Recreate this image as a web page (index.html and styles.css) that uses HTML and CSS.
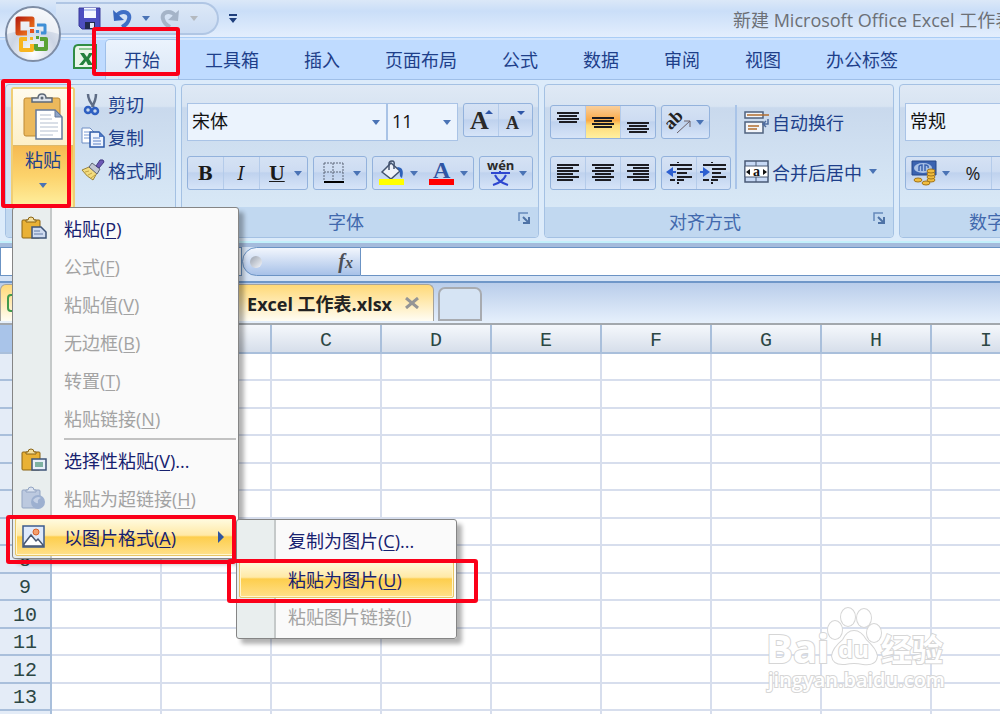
FILE: index.html
```html
<!DOCTYPE html>
<html lang="zh-CN">

<head>
    <meta charset="UTF-8">
    <meta name="viewport" content="width=device-width, initial-scale=1.0">
    <title>Microsoft Office Excel</title>
    <link rel="stylesheet" href="styles.css">
</head>

<body>
    <div class="window">

        <!-- Title bar -->
        <header class="titlebar">
            <div class="quick">
                <button class="icon-btn" aria-label="保存">
                    <svg width="24" height="24" viewBox="0 0 24 24">
                        <path d="M1 1h21v21H4l-3-3z" fill="#4d4fc0" stroke="#3a3b9a"/>
                        <path d="M6 1h12v10H6z" fill="#f4f7ff"/>
                        <path d="M6 2h12v2H6z" fill="#b8c6ee"/>
                        <path d="M7 15h10v7H7z" fill="#222b4e"/>
                        <path d="M12 16h4v5h-4z" fill="#dfe6f7"/>
                    </svg>
                </button>
                <button class="icon-btn" aria-label="撤消">
                    <svg width="22" height="20" viewBox="0 0 22 20">
                        <path d="M5 7C11 0 20 3 18 10c-1 4-3 6-7 8" fill="none" stroke="#3f6fc6" stroke-width="4"/>
                        <path d="M2 1l1 11 10-1z" fill="#3767bf"/>
                    </svg>
                </button>
                <span class="arrow"></span>
                <button class="icon-btn" aria-label="恢复">
                    <svg width="22" height="20" viewBox="0 0 22 20">
                        <path d="M17 7C11 0 2 3 4 10c1 4 3 6 7 8" fill="none" stroke="#a5b4c8" stroke-width="4"/>
                        <path d="M20 1l-1 11-10-1z" fill="#a5b4c8"/>
                    </svg>
                </button>
                <span class="arrow pale"></span>
            </div>
            <button class="icon-btn customize" aria-label="自定义快速访问工具栏">
                <svg width="10" height="10" viewBox="0 0 10 10">
                    <path d="M1 0h8v2H1zM1 4h8L5 9z" fill="#1f3f7d"/>
                </svg>
            </button>
            <h1 class="doc-title">新建 Microsoft Office Excel 工作表.xlsx</h1>
        </header>

        <button class="office-btn" aria-label="Office 按钮">
            <svg width="58" height="58" viewBox="0 0 58 58">
                <defs>
                    <radialGradient id="orb" cx="50%" cy="85%" r="85%">
                        <stop offset="0" stop-color="#ffffff"/>
                        <stop offset="0.5" stop-color="#ccd5e4"/>
                        <stop offset="1" stop-color="#eef2f8"/>
                    </radialGradient>
                    <linearGradient id="red" x1="0" y1="0" x2="1" y2="1">
                        <stop offset="0" stop-color="#b92410"/>
                        <stop offset="1" stop-color="#f37b1c"/>
                    </linearGradient>
                </defs>
                <circle cx="29" cy="29" r="27" fill="url(#orb)" stroke="#7e8da5" stroke-width="2"/>
                <path d="M3 29a26 26 0 0 1 52 0q-26-8-52 0z" fill="#fff" opacity=".55"/>
                <g fill="none" stroke-width="4" stroke-linejoin="round">
                    <path d="M23 28h-9V14h14v8" stroke="url(#red)" stroke-width="5"/>
                    <path d="M33 20h8v8h-4" stroke="#3f8fd6" stroke-width="3"/>
                    <path d="M23 34h-6v11h11v-6" stroke="#f8b51f"/>
                    <path d="M32 39v5h10V34h-6" stroke="#5aa234"/>
                </g>
                <path d="M26 28h4v-4h-4z" fill="#e9521d"/>
                <path d="M32 28h3v-3h-3z" fill="#3f8fd6"/>
                <path d="M26 32h3v3h-3z" fill="#f8b51f"/>
                <path d="M32 31h3v3h-3z" fill="#5aa234"/>
            </svg>
        </button>

        <!-- Ribbon tabs -->
        <nav class="tabs">
            <svg class="app-icon" width="24" height="26" viewBox="0 0 24 26">
                <path d="M5 1h18v23H1V6q0-5 4-5z" fill="#eaf6ea" stroke="#2f8d44" stroke-width="2"/>
                <path d="M6 4h15v2H6z" fill="#8cca93"/>
                <path d="M7 9h4l3 4 2-4h4l-4 6 4 6h-5l-2-4-3 4H6l5-6z" fill="#23803b"/>
            </svg>
            <button class="tab active">开始</button>
            <button class="tab">工具箱</button>
            <button class="tab">插入</button>
            <button class="tab">页面布局</button>
            <button class="tab">公式</button>
            <button class="tab">数据</button>
            <button class="tab">审阅</button>
            <button class="tab">视图</button>
            <button class="tab">办公标签</button>
        </nav>

        <!-- Ribbon -->
        <div class="ribbon">
            <section class="group clipboard">
                <div class="group-body">
                    <button class="paste">
                        <span class="paste-icon">
                            <svg width="42" height="48" viewBox="0 0 42 48">
                                <rect x="1" y="5" width="36" height="38" rx="2" fill="#ecb95c" stroke="#bd8a35"/>
                                <path d="M9 9V5h6q0-4 4-4t4 4h6v4z" fill="#dde2e9" stroke="#5e6978" stroke-width="1.5"/>
                                <circle cx="19" cy="5" r="1.5" fill="#5e6978"/>
                                <path d="M13 17h19l7 7v22H13z" fill="#fff" stroke="#64799c" stroke-width="1.5"/>
                                <path d="M32 17v7h7z" fill="#8fa5c8" stroke="#64799c"/>
                                <path d="M17 22h11M17 26h12M17 30h18M17 34h18M17 38h18M17 42h13" stroke="#b4bfd0"/>
                            </svg>
                        </span>
                        <span class="paste-text">粘贴<span class="arrow"></span></span>
                    </button>
                    <div class="edit-list">
                        <button class="text-btn">
                            <svg width="24" height="24" viewBox="0 0 24 24">
                                <path d="M7 2q0 6 6 13M15 2q0 6-4 13" fill="none" stroke="#5e6c85" stroke-width="2.5"/>
                                <circle cx="7" cy="18" r="3" fill="none" stroke="#2e5fc1" stroke-width="2.5"/>
                                <circle cx="14" cy="19" r="3" fill="none" stroke="#2e5fc1" stroke-width="2.5"/>
                            </svg>
                            剪切
                        </button>
                        <button class="text-btn">
                            <svg width="24" height="24" viewBox="0 0 24 24">
                                <path d="M1 3h8l4 4v11H1z" fill="#fff" stroke="#6f8ec4"/>
                                <path d="M3 7h5M3 10h6M3 13h6" stroke="#7b9bd3"/>
                                <path d="M9 7h9l5 5v10H9z" fill="#eef4ff" stroke="#2d59a8" stroke-width="1.5"/>
                                <path d="M18 7v5h5z" fill="#4f79c4"/>
                                <path d="M12 13h7M12 16h8M12 19h8" stroke="#5b80c4"/>
                            </svg>
                            复制
                        </button>
                        <button class="text-btn">
                            <svg width="24" height="24" viewBox="0 0 24 24">
                                <path d="M1 12l7-3 8 6-4 7q-6-3-11-10z" fill="#f3dc7f" stroke="#9c8439"/>
                                <path d="M4 14l4-1M7 17l4-2M10 20l4-3" stroke="#c5a544"/>
                                <path d="M8 9l3-4 8 6-3 5z" fill="#c2c7d3" stroke="#5f6575"/>
                                <path d="M15 8l4-6q4-1 4 2l-5 6z" fill="#6c59b5" stroke="#423a81"/>
                            </svg>
                            格式刷
                        </button>
                    </div>
                </div>
                <div class="caption"></div>
            </section>

            <section class="group font">
                <div class="group-body">
                    <div class="row">
                        <div class="combos">
                            <label class="combo wide">
                                <select aria-label="字体"><option>宋体</option></select>
                                <span class="arrow"></span>
                            </label>
                            <label class="combo size">
                                <select aria-label="字号"><option>11</option></select>
                                <span class="arrow"></span>
                            </label>
                        </div>
                        <div class="btns grow">
                            <button aria-label="增大字号">
                                <svg width="26" height="26" viewBox="0 0 26 26">
                                    <text x="2" y="22" class="glyph">A</text>
                                    <path d="M17 7h8l-4-4z" fill="#2f57a8"/>
                                </svg>
                            </button>
                            <button aria-label="减小字号">
                                <svg width="26" height="26" viewBox="0 0 26 26">
                                    <text x="4" y="22" class="glyph small">A</text>
                                    <path d="M15 4h8l-4 4z" fill="#2f57a8"/>
                                </svg>
                            </button>
                        </div>
                    </div>
                    <div class="row second">
                        <div class="btns biu">
                            <button class="serif">B</button>
                            <button class="serif italic">I</button>
                            <button class="serif under">U</button>
                            <span class="arrow"></span>
                        </div>
                        <div class="btns border">
                            <button aria-label="边框">
                                <svg width="22" height="22" viewBox="0 0 22 22">
                                    <path d="M1 1h19M1 10h19M1 1v17M10 1v17M20 1v17" stroke="#5c6779" stroke-dasharray="2 1" fill="none"/>
                                    <path d="M1 20h20" stroke="#000" stroke-width="2"/>
                                </svg>
                            </button>
                            <span class="arrow"></span>
                        </div>
                        <div class="btns colors">
                            <button aria-label="填充颜色">
                                <svg width="26" height="26" viewBox="0 0 26 26">
                                    <path d="M3 12l9-9 9 8-9 8z" fill="#eef2f9" stroke="#43536f" stroke-width="1.5"/>
                                    <path d="M10 10V4q0-3 3-3t2 4v4" fill="none" stroke="#43536f" stroke-width="1.5"/>
                                    <path d="M18 7q8 0 5 11-3-1-2-6z" fill="#2d61b9"/>
                                    <path d="M0 19h25v6H0z" fill="#ffff00"/>
                                </svg>
                            </button>
                            <span class="arrow"></span>
                            <button aria-label="字体颜色">
                                <svg width="26" height="26" viewBox="0 0 26 26">
                                    <text x="4" y="18" class="glyph blue">A</text>
                                    <path d="M0 19h25v6H0z" fill="#ff0000"/>
                                </svg>
                            </button>
                            <span class="arrow"></span>
                        </div>
                        <div class="btns wen">
                            <button aria-label="拼音">
                                <svg width="28" height="28" viewBox="0 0 28 28">
                                    <text x="1" y="11" class="pinyin">wén</text>
                                    <path d="M5 14h19M14 12v3M9 16q3 7 13 10M20 16q-3 7-13 10" fill="none" stroke="#2e47d0" stroke-width="2"/>
                                </svg>
                            </button>
                            <span class="arrow"></span>
                        </div>
                    </div>
                </div>
                <div class="caption">字体
                    <svg class="launcher" width="12" height="12" viewBox="0 0 12 12">
                        <path d="M1 9V1h9" fill="none" stroke="#6689ba" stroke-width="1.5"/>
                        <path d="M5 5l5 5M11 5v6H5" fill="none" stroke="#4f73a6" stroke-width="2"/>
                    </svg>
                </div>
            </section>

            <section class="group align">
                <div class="group-body side">
                    <div>
                        <div class="row">
                            <div class="btns three">
                                <button aria-label="顶端对齐">
                                    <svg width="22" height="24" viewBox="0 0 22 24"><path d="M0 3h22M2 6h18M0 9h22M2 12h18"/></svg>
                                </button>
                                <button class="on" aria-label="垂直居中">
                                    <svg width="22" height="24" viewBox="0 0 22 24"><path d="M0 8h22M2 11h18M0 14h22M2 17h18"/></svg>
                                </button>
                                <button aria-label="底端对齐">
                                    <svg width="22" height="24" viewBox="0 0 22 24"><path d="M0 13h22M2 16h18M0 19h22M2 22h18"/></svg>
                                </button>
                            </div>
                            <div class="btns orient">
                                <button aria-label="方向">
                                    <svg width="26" height="26" viewBox="0 0 26 26">
                                        <text x="0" y="16" class="ab" transform="rotate(-45 9 13)">ab</text>
                                        <path d="M11 24L24 12M18 12h6v6" fill="none" stroke="#6b6068"/>
                                    </svg>
                                </button>
                                <span class="arrow"></span>
                            </div>
                        </div>
                        <div class="row second">
                            <div class="btns three">
                                <button aria-label="左对齐">
                                    <svg width="22" height="24" viewBox="0 0 22 24"><path d="M0 4h22M0 7h16M0 10h22M0 13h16M0 16h22M0 19h16"/></svg>
                                </button>
                                <button aria-label="居中">
                                    <svg width="22" height="24" viewBox="0 0 22 24"><path d="M0 4h22M3 7h16M0 10h22M3 13h16M0 16h22M3 19h16"/></svg>
                                </button>
                                <button aria-label="右对齐">
                                    <svg width="22" height="24" viewBox="0 0 22 24"><path d="M0 4h22M6 7h16M0 10h22M6 13h16M0 16h22M6 19h16"/></svg>
                                </button>
                            </div>
                            <div class="btns indent">
                                <button aria-label="减少缩进量">
                                    <svg width="26" height="24" viewBox="0 0 26 24">
                                        <path d="M4 4h22M11 8h15M11 12h10M11 16h15M4 19h5M11 19h7M12 1v1M12 21v2"/>
                                        <path d="M10 11H4" stroke="#2d5fd0"/>
                                        <path d="M0 11l7-5v10z" fill="#2d5fd0" stroke="none"/>
                                    </svg>
                                </button>
                                <button aria-label="增加缩进量">
                                    <svg width="26" height="24" viewBox="0 0 26 24">
                                        <path d="M3 4h23M12 8h14M12 12h9M12 16h14M3 19h6M11 19h7M12 1v1M12 21v2"/>
                                        <path d="M0 11h5" stroke="#2d5fd0"/>
                                        <path d="M10 11L3 6v10z" fill="#2d5fd0" stroke="none"/>
                                    </svg>
                                </button>
                            </div>
                        </div>
                    </div>
                    <div class="wrap-list">
                        <button class="text-btn">
                            <svg width="26" height="24" viewBox="0 0 26 24">
                                <path d="M1 2h18v6H1zM1 12h18v11H1z" fill="#f2f5fa" stroke="#4f627f" stroke-width="1.5"/>
                                <path d="M3 5h22M4 16h11M4 19h9" stroke="#b16d2f" stroke-width="1.5"/>
                                <path d="M24 9v5h-4M22 11l-3 3 3 3" fill="none" stroke="#4f6c9f" stroke-width="1.5"/>
                            </svg>
                            自动换行
                        </button>
                        <button class="text-btn">
                            <svg width="26" height="24" viewBox="0 0 26 24">
                                <path d="M1 1h23v21H1z" fill="#c7d9f5" stroke="#4a5a75" stroke-width="1.5"/>
                                <path d="M1 6h23v11H1z" fill="#fff" stroke="#4a5a75"/>
                                <path d="M12 1v5M12 17v5" stroke="#4a5a75"/>
                                <path d="M2 12l4-3v6zM23 12l-4-3v6z" fill="#111"/>
                                <text x="9" y="16" class="cell-a">a</text>
                            </svg>
                            合并后居中<span class="arrow"></span>
                        </button>
                    </div>
                </div>
                <div class="caption">对齐方式
                    <svg class="launcher" width="12" height="12" viewBox="0 0 12 12">
                        <path d="M1 9V1h9" fill="none" stroke="#6689ba" stroke-width="1.5"/>
                        <path d="M5 5l5 5M11 5v6H5" fill="none" stroke="#4f73a6" stroke-width="2"/>
                    </svg>
                </div>
            </section>

            <section class="group number">
                <div class="group-body">
                    <div class="row">
                        <label class="combo">
                            <select aria-label="数字格式"><option>常规</option></select>
                        </label>
                    </div>
                    <div class="row second">
                        <div class="btns money">
                            <button aria-label="会计数字格式">
                                <svg width="26" height="26" viewBox="0 0 26 26">
                                    <path d="M1 1h24v14H1z" fill="#3b63b0" stroke="#27488a"/>
                                    <ellipse cx="12" cy="8" rx="9" ry="5" fill="#a9c1e6"/>
                                    <path d="M8 11V7q0-2 3-2v6M14 11V5q4 0 3 3" fill="none" stroke="#3b63b0" stroke-width="1.5"/>
                                    <g fill="#f1bd3e" stroke="#a1741c">
                                        <ellipse cx="20" cy="20" rx="4" ry="2"/>
                                        <ellipse cx="20" cy="17" rx="4" ry="2"/>
                                        <ellipse cx="20" cy="14" rx="4" ry="2"/>
                                        <ellipse cx="20" cy="11" rx="4" ry="2"/>
                                        <ellipse cx="7" cy="20" rx="4" ry="2"/>
                                        <ellipse cx="15" cy="23" rx="4" ry="2"/>
                                    </g>
                                </svg>
                            </button>
                            <span class="arrow"></span>
                            <button class="percent">%</button>
                            <button class="blank" aria-label="千位分隔样式"></button>
                        </div>
                    </div>
                </div>
                <div class="caption">数字</div>
            </section>
        </div>

        <!-- Formula bar -->
        <div class="formula-bar">
            <div class="name-box"></div>
            <div class="fx">
                <span class="knob"></span>
                <button class="fx-btn" aria-label="插入函数"><i>f<sub>x</sub></i></button>
            </div>
            <input class="formula" type="text" aria-label="编辑栏">
        </div>

        <!-- Open workbooks -->
        <div class="books">
            <div class="book">
                <span class="book-icon"></span>
                <span>Excel 工作表.xlsx</span>
                <button class="close" aria-label="关闭">
                    <svg width="14" height="12" viewBox="0 0 14 12">
                        <path d="M1 1l12 10M13 1L1 11" stroke="#959595" stroke-width="3"/>
                    </svg>
                </button>
            </div>
            <button class="new-book" aria-label="新建"></button>
        </div>

        <!-- Sheet -->
        <main class="sheet">
            <table>
                <thead>
                    <tr id="letters"><th class="corner"></th></tr>
                </thead>
                <tbody id="cells"></tbody>
            </table>
        </main>

        <!-- Paste menu -->
        <div class="menu paste-menu">
            <button class="item">
                <svg width="26" height="24" viewBox="0 0 26 24">
                    <rect x="1" y="4" width="18" height="18" rx="1" fill="#e9b135" stroke="#8b6414"/>
                    <path d="M5 6V4h2q0-3 3-3t3 3h2v2z" fill="#f4df9c" stroke="#8b6414"/>
                    <path d="M11 11h9l5 5v6H11z" fill="#cfdbef" stroke="#3e5478" stroke-width="1.5"/>
                    <path d="M13 15h6M13 18h9" stroke="#627ba6"/>
                </svg>
                <span>粘贴(<u>P</u>)</span>
            </button>
            <button class="item" disabled><span>公式(<u>F</u>)</span></button>
            <button class="item" disabled><span>粘贴值(<u>V</u>)</span></button>
            <button class="item" disabled><span>无边框(<u>B</u>)</span></button>
            <button class="item" disabled><span>转置(<u>T</u>)</span></button>
            <button class="item" disabled><span>粘贴链接(<u>N</u>)</span></button>
            <div class="line"></div>
            <button class="item">
                <svg width="26" height="24" viewBox="0 0 26 24">
                    <rect x="1" y="4" width="18" height="18" rx="1" fill="#e9b135" stroke="#8b6414"/>
                    <path d="M5 6V4h2q0-3 3-3t3 3h2v2z" fill="#f4df9c" stroke="#8b6414"/>
                    <path d="M11 11h14v11H11z" fill="#e8effa" stroke="#3e5478" stroke-width="1.5"/>
                    <path d="M14 14h8v5h-8z" fill="#7db1a1"/>
                </svg>
                <span>选择性粘贴(<u>V</u>)...</span>
            </button>
            <button class="item" disabled>
                <svg width="26" height="24" viewBox="0 0 26 24">
                    <rect x="1" y="4" width="18" height="18" rx="1" fill="#bcc9df" stroke="#93a5c3"/>
                    <path d="M5 6V4h2q0-3 3-3t3 3h2v2z" fill="#dbe3f0" stroke="#93a5c3"/>
                    <circle cx="17" cy="16" r="7" fill="#9db0d0"/>
                    <path d="M12 14q4-5 8-2-4 1-3 5-3 1-5-3z" fill="#c4d0e5"/>
                </svg>
                <span>粘贴为超链接(<u>H</u>)</span>
            </button>
            <button class="item hot">
                <svg width="26" height="24" viewBox="0 0 26 24">
                    <path d="M2 1h21v21H2z" fill="#dfeafb" stroke="#3d5b8e" stroke-width="1.5"/>
                    <circle cx="15" cy="7" r="3" fill="#f3a070" stroke="#d9622b"/>
                    <path d="M3 19l7-9 5 6 2-2 5 6v1H3z" fill="#fff" stroke="#46556f" stroke-width="1.5"/>
                </svg>
                <span>以图片格式(<u>A</u>)</span>
                <span class="more"></span>
            </button>
        </div>

        <div class="menu picture-menu">
            <button class="item"><span>复制为图片(<u>C</u>)...</span></button>
            <button class="item hot"><span>粘贴为图片(<u>U</u>)</span></button>
            <button class="item" disabled><span>粘贴图片链接(<u>I</u>)</span></button>
        </div>

        <!-- Red marks over the steps -->
        <div class="mark mark-tab"></div>
        <div class="mark mark-paste"></div>
        <div class="mark mark-format"></div>
        <div class="mark mark-picture"></div>

        <svg class="watermark" width="184" height="90" viewBox="0 0 184 90">
            <g class="wm">
                <ellipse cx="70" cy="34" rx="7" ry="9"/>
                <ellipse cx="83" cy="21" rx="7" ry="9"/>
                <ellipse cx="99" cy="22" rx="7" ry="9"/>
                <ellipse cx="109" cy="37" rx="7" ry="9"/>
                <text x="1" y="67" class="wm-big">Bai</text>
                <path d="M89 35q7 0 12 9 10 9 11 16-1 10-14 8-9-2-18 0-12 1-13-8 1-8 11-16 4-9 11-9z"/>
                <text x="73" y="62" class="wm-du">du</text>
                <text x="116" y="65" class="wm-cn">经验</text>
                <text x="3" y="91" class="wm-url">jingyan.baidu.com</text>
            </g>
        </svg>
    </div>
    <script src="script.js"></script>
</body>

</html>
```

FILE: styles.css
```css
* {
    box-sizing: border-box;
}

body {
    margin: 0;
    overflow: hidden;
    font-family: "Open Sans", "Noto Sans CJK SC", sans-serif;
    font-size: 18px;
    color: #1e3f8a;
}

button,
select,
input {
    font: inherit;
    color: inherit;
    border: none;
    background: none;
    padding: 0;
    margin: 0;
}

svg {
    display: block;
    flex: none;
}

.window {
    position: relative;
    height: 100vh;
    overflow: hidden;
    display: flex;
    flex-direction: column;
    background-color: #bfdbff;
}

.arrow {
    flex: none;
    width: 0;
    border: 4px solid transparent;
    border-top: 5px solid #4a73b5;
    border-bottom: none;
}

.pale {
    border-top-color: #b4b9bf;
}

/* title bar */

.titlebar {
    display: flex;
    flex: none;
    align-items: center;
    height: 38px;
    padding-left: 56px;
    background: linear-gradient(#dbe8f8, #cadef8 30%, #e3eefd);
    border-bottom: 1px solid #aacdf5;
}

.quick {
    display: flex;
    flex: none;
    align-items: center;
    gap: 9px;
    width: 163px;
    height: 33px;
    padding-left: 22px;
    border: 2px solid #b0c6e4;
    border-left: none;
    border-radius: 0 17px 17px 0;
    background: linear-gradient(#dce8f7, #cbdcf3);
}

.customize {
    margin-left: 9px;
}

.doc-title {
    flex: none;
    margin: 0 0 0 495px;
    font-size: 18px;
    font-weight: normal;
    color: #6c7076;
    white-space: nowrap;
}

.office-btn {
    position: absolute;
    left: 4px;
    top: 5px;
}

/* tabs */

.tabs {
    display: flex;
    flex: none;
    align-items: flex-end;
    gap: 9px;
    height: 42px;
    padding-left: 73px;
    border-top: 2px solid #d3e6fe;
    border-bottom: 1px solid #9fbfe8;
}

.app-icon {
    align-self: flex-start;
    margin-top: 4px;
}

.tab {
    height: 39px;
    padding: 0 18px 2px;
    white-space: nowrap;
}

.active {
    background: linear-gradient(#ebf3fd, #dce8f6);
    border-radius: 4px 4px 0 0;
    box-shadow: 0 0 0 1px #9fc0ea;
}

/* ribbon */

.ribbon {
    display: flex;
    flex: none;
    gap: 5px;
    height: 163px;
    padding: 4px 0 3px 5px;
    background-color: #dcebfa;
    border-bottom: 2px solid #c3f0fb;
}

.group {
    display: flex;
    flex: none;
    flex-direction: column;
    border: 1px solid #a4c1e3;
    border-radius: 4px;
    background: linear-gradient(#dfe9f5, #d8e4f2 14%, #c9d9ed 15%, #d8e8f6 80%);
}

.clipboard {
    width: 171px;
}

.font {
    width: 358px;
}

.align {
    width: 350px;
}

.number {
    width: 176px;
}

.group-body {
    flex: 1;
    padding: 18px 5px 0;
}

.caption {
    position: relative;
    height: 30px;
    line-height: 31px;
    padding-right: 28px;
    text-align: center;
    color: #4169ad;
    background-color: #c1d8f0;
    border-radius: 0 0 4px 4px;
}

.number .caption {
    padding-right: 0;
}

.launcher {
    position: absolute;
    right: 8px;
    top: 5px;
}

.clipboard .group-body {
    display: flex;
    gap: 6px;
    padding: 2px 5px 0;
}

.paste {
    display: flex;
    flex-direction: column;
    width: 64px;
    height: 122px;
    border: 2px solid #f0ce74;
    border-radius: 3px;
}

.paste-icon {
    width: 100%;
    height: 57px;
    padding: 4px 0 0 10px;
    background: linear-gradient(#fffbee, #fdf0c8);
    border-bottom: 1px solid #dcb96c;
}

.paste-text {
    display: flex;
    flex: 1;
    flex-direction: column;
    align-items: center;
    width: 100%;
    line-height: 28px;
    gap: 9px;
    background: linear-gradient(#f5ba52, #fcd36c 50%, #fff0a0);
}

.edit-list {
    display: flex;
    flex-direction: column;
}

.text-btn {
    display: flex;
    align-items: center;
    gap: 3px;
    height: 33px;
    white-space: nowrap;
}

.row {
    display: flex;
    align-items: flex-start;
    gap: 5px;
    height: 38px;
}

.second {
    margin-top: 15px;
}

.align .row {
    height: 34px;
}

.align .second {
    margin-top: 17px;
}

.combos {
    display: flex;
}

.combo {
    display: grid;
    align-items: center;
    height: 38px;
    color: #111;
    background-color: #ebf3fd;
    border: 1px solid #a9c3e6;
}

.combo select {
    grid-area: 1 / 1;
    width: 100%;
    height: 34px;
    padding: 0 4px 2px;
    appearance: none;
    outline: none;
}

.combo .arrow {
    grid-area: 1 / 1;
    justify-self: end;
    margin-right: 6px;
}

.wide {
    width: 200px;
}

.size {
    width: 71px;
}

.number .combo {
    width: 164px;
}

.btns {
    display: flex;
    align-items: center;
    height: 34px;
    border: 1px solid #93b2dc;
    border-radius: 3px;
    background: linear-gradient(#d5e2f4, #cddcf2 45%, #bfd2ee 50%, #d6e4f8);
}

.btns button {
    display: flex;
    flex: 1;
    align-items: center;
    justify-content: center;
    height: 32px;
}

.btns button + button {
    border-left: 1px solid #b4cbea;
}

.btns .arrow {
    margin-right: 5px;
}

.grow {
    width: 70px;
}

.biu {
    width: 122px;
}

.border {
    width: 54px;
}

.colors {
    width: 103px;
}

.wen {
    width: 54px;
}

.three {
    width: 106px;
}

.orient {
    width: 49px;
}

.indent {
    width: 70px;
}

.money {
    width: 164px;
}

.btns.money button {
    flex: none;
    width: 36px;
}

.percent {
    color: #222;
}

.btns .serif {
    font-family: "DejaVu Serif", serif;
    font-weight: bold;
    color: #1a1a1a;
}

.btns .italic {
    font-weight: normal;
    font-style: italic;
}

.btns .under {
    text-decoration: underline;
}

.btns .on {
    background: linear-gradient(#f9cf9c, #fbab48 45%, #fdd976 60%, #fff0a0);
}

.align .three path,
.indent path {
    stroke-width: 2;
}

.align .three svg,
.indent svg {
    stroke: #1c1c22;
}

.glyph {
    font: bold 26px "Liberation Serif", serif;
    fill: #2a2a2a;
}

.glyph.small {
    font-size: 18px;
}

.glyph.blue {
    font-size: 24px;
    fill: #2f55a4;
}

.pinyin {
    font: bold 13px "Open Sans", sans-serif;
    fill: #2a2a2a;
}

.ab {
    font: bold 18px "Liberation Serif", serif;
    fill: #222;
}

.cell-a {
    font: bold 14px "Liberation Serif", serif;
    fill: #111;
}

.align .side {
    display: flex;
    gap: 4px;
    padding-top: 20px;
}

.wrap-list {
    display: flex;
    flex-direction: column;
    gap: 17px;
    height: 84px;
    padding-left: 7px;
    border-left: 2px solid #a9c4e8;
}

.wrap-list .text-btn {
    gap: 2px;
}

.wrap-list .arrow {
    margin-left: 5px;
}

/* formula bar */

.formula-bar {
    display: flex;
    flex: none;
    height: 40px;
    padding-bottom: 5px;
    border-top: 4px solid #a4bbdc;
    border-bottom: 2px solid #6f97c8;
    background-color: #d5e3f5;
}

.name-box {
    width: 242px;
    background-color: #fff;
    border: 1px solid #6b93c4;
}

.fx {
    display: flex;
    align-items: center;
    justify-content: space-between;
    width: 119px;
    padding: 0 7px;
    border: 1px solid #6b93c4;
    border-radius: 15px 0 0 15px;
    background: linear-gradient(#f2f6fd, #a7c1e8);
}

.knob {
    width: 12px;
    height: 12px;
    border-radius: 50%;
    background: linear-gradient(135deg, #9aa2af, #f5f7fb);
}

.fx-btn {
    font: bold 20px "Liberation Serif", serif;
    color: #4a4f58;
}

.fx-btn sub {
    font-size: 16px;
    line-height: 0;
    vertical-align: baseline;
}

.formula {
    flex: 1;
    min-width: 0;
    background-color: #fff;
    border-top: 1px solid #6b93c4;
    border-bottom: 1px solid #6b93c4;
}

/* workbook tabs */

.books {
    display: flex;
    flex: none;
    align-items: flex-end;
    gap: 4px;
    height: 42px;
    padding-bottom: 2px;
    border-bottom: 2px solid #a3a8ad;
    background: linear-gradient(#b9cdea, #e6f0fc);
}

.book {
    display: flex;
    align-items: center;
    justify-content: flex-end;
    gap: 13px;
    width: 434px;
    height: 37px;
    padding-right: 14px;
    font-weight: bold;
    color: #222;
    white-space: nowrap;
    border: 1px solid #a5a39c;
    border-bottom: none;
    border-radius: 6px 6px 0 0;
    background: linear-gradient(#ffd977, #fffdf4);
}

.book-icon {
    width: 12px;
    height: 18px;
    margin-right: auto;
    margin-left: 6px;
    border: 2px solid #3f9a4c;
    border-radius: 4px;
}

.new-book {
    width: 44px;
    height: 34px;
    border: 2px solid #a8abb0;
    border-radius: 7px 7px 0 0;
    background-color: #d6e4f4;
}

/* sheet */

.sheet {
    flex: 1;
    overflow: hidden;
    background-color: #fff;
}

.sheet table {
    width: 1042px;
    table-layout: fixed;
    border-collapse: separate;
    border-spacing: 0;
    font-family: "Liberation Mono", monospace;
    font-size: 20px;
    line-height: 22px;
}

.sheet th,
.sheet td {
    height: 28px;
    padding: 0;
    border-right: 2px solid #d7deed;
    border-bottom: 2px solid #d7deed;
}

.sheet tbody tr:nth-child(odd) > * {
    height: 27px;
}

.sheet th {
    padding-top: 3px;
    font-weight: normal;
    color: #2c4744;
    background-color: #e4ecf7;
    border-color: #a9bfdb;
}

.sheet thead th {
    height: 29px;
    padding-top: 4px;
    background: linear-gradient(#f5f8fc, #d6deea);
}

.sheet thead .corner {
    width: 52px;
    background: #a9c4e9;
}

/* menus */

.menu {
    position: absolute;
    padding: 2px;
    border: 1px solid #858585;
    border-radius: 3px;
    background: linear-gradient(90deg, #e9eeee 37px, #c5c9c9 37px, #c5c9c9 39px, #fafafa 39px);
    box-shadow: 5px 5px 4px rgba(0, 0, 0, 0.3);
}

.paste-menu {
    left: 12px;
    top: 207px;
    width: 227px;
}

.picture-menu {
    left: 236px;
    top: 519px;
    width: 221px;
}

.item {
    display: grid;
    grid-template-columns: 43px 1fr 10px;
    align-items: center;
    width: 100%;
    height: 38px;
    padding: 0 8px 2px 6px;
    text-align: left;
    color: #17216f;
    white-space: nowrap;
}

.item > span:not(.more) {
    grid-column: 2;
}

.item:disabled {
    color: #a3a3a3;
}

.item u {
    text-underline-offset: 2px;
}

.hot {
    border: 1px solid #e8c565;
    border-radius: 2px;
    padding: 0 7px 1px 5px;
    background: linear-gradient(#fffbe0, #ffe9a6 45%, #fdce4d 50%, #ffe08a);
    box-shadow: inset 0 0 0 1px #fff6cf;
}

.more {
    width: 0;
    border: 6px solid transparent;
    border-left-color: #2f55a0;
    border-right: none;
}

.line {
    height: 4px;
    margin-left: 49px;
    border-top: 2px solid #c2c2c2;
}

/* marks */

.mark {
    position: absolute;
    border: 4px solid #fb0019;
    border-radius: 3px;
}

.mark-tab {
    left: 92px;
    top: 27px;
    width: 88px;
    height: 49px;
}

.mark-paste {
    left: 1px;
    top: 79px;
    width: 70px;
    height: 129px;
}

.mark-format {
    left: 6px;
    top: 515px;
    width: 230px;
    height: 49px;
}

.mark-picture {
    left: 227px;
    top: 559px;
    width: 251px;
    height: 44px;
}

/* watermark */

.watermark {
    position: absolute;
    right: 51px;
    bottom: 28px;
    overflow: visible;
}

.wm {
    fill: #fff;
    stroke: #d6d6d6;
    stroke-width: 2;
    paint-order: stroke;
    font-family: "Open Sans", "Noto Sans CJK SC", sans-serif;
    font-weight: bold;
}

.wm-big {
    font-size: 40px;
}

.wm-du {
    font-size: 24px;
}

.wm-cn {
    font-size: 31px;
}

.wm-url {
    font-size: 20px;
    font-weight: 600;
}
```

FILE: script.js
```js
// column letters
var letters = document.getElementById("letters");
"ABCDEFGHI".split("").forEach(function (letter) {
    letters.innerHTML += "<th>" + letter + "</th>";
});

// numbered rows
var cells = document.getElementById("cells");
for (var i = 1; i <= 14; i++) {
    cells.innerHTML += "<tr><th>" + i + "</th>" + "<td></td>".repeat(9) + "</tr>";
}
```
